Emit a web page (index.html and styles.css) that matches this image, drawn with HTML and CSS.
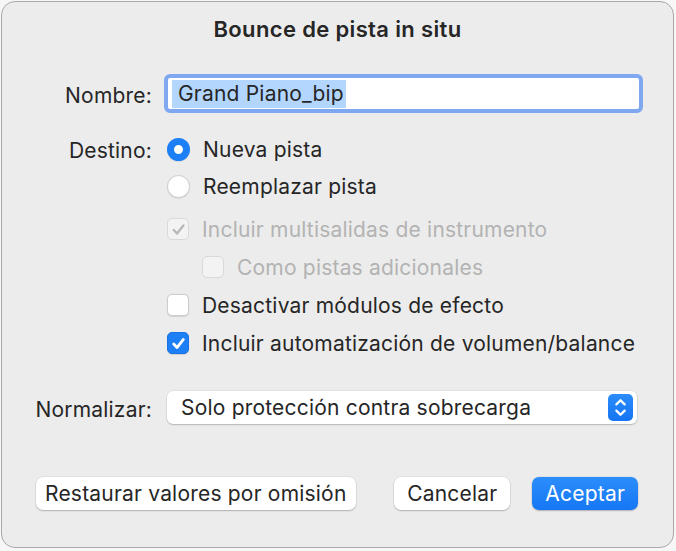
FILE: index.html
```html
<!DOCTYPE html>
<html lang="es">
<head>
    <meta charset="UTF-8">
    <meta name="viewport" content="width=device-width, initial-scale=1.0">
    <title>Bounce de pista in situ</title>
    <link rel="stylesheet" href="styles.css">
</head>
<body>
    <div class="dialog">
        <h1 class="title">Bounce de pista in situ</h1>

        <div class="form">
            <div class="label name-label">Nombre:</div>
            <div class="field">
                <div class="text-field"><span class="selected">Grand Piano_bip</span></div>
            </div>

            <div class="label dest-label">Destino:</div>
            <div class="options">
                <div class="option short">
                    <span class="radio checked"></span>
                    <span>Nueva pista</span>
                </div>
                <div class="option short">
                    <span class="radio"></span>
                    <span>Reemplazar pista</span>
                </div>
                <div class="option disabled spaced">
                    <span class="check checked">
                        <svg viewBox="0 0 16 16"><path d="M3.5 8.5 L6.6 11.8 L12.6 4.2" /></svg>
                    </span>
                    <span>Incluir multisalidas de instrumento</span>
                </div>
                <div class="option disabled nested">
                    <span class="check"></span>
                    <span>Como pistas adicionales</span>
                </div>
                <div class="option">
                    <span class="check"></span>
                    <span>Desactivar módulos de efecto</span>
                </div>
                <div class="option">
                    <span class="check checked on">
                        <svg viewBox="0 0 16 16"><path d="M3.5 8.5 L6.6 11.8 L12.6 4.2" /></svg>
                    </span>
                    <span>Incluir automatización de volumen/balance</span>
                </div>
            </div>

            <div class="label norm-label">Normalizar:</div>
            <div class="popup">
                <span>Solo protección contra sobrecarga</span>
                <span class="stepper">
                    <svg viewBox="0 0 24 26"><path d="M8 10 L12 6 L16 10 M8 16 L12 20 L16 16" /></svg>
                </span>
            </div>
        </div>

        <div class="buttons">
            <button class="btn reset">Restaurar valores por omisión</button>
            <button class="btn cancel">Cancelar</button>
            <button class="btn primary">Aceptar</button>
        </div>
    </div>
</body>
</html>
```

FILE: styles.css
```css
body {
    margin: 0;
    padding: 1px;
    background-color: #f7f7f7;
    font-family: Inter, "Noto Sans", sans-serif;
    color: #262626;
}

.dialog {
    box-sizing: border-box;
    width: 673px;
    height: 547px;
    background-color: #ececec;
    border: 1px solid #a9a9a9;
    border-radius: 14px;
}

.title {
    margin: 0;
    height: 56px;
    line-height: 54px;
    text-align: center;
    font-size: 22px;
    font-weight: 600;
    letter-spacing: 0.35px;
}

.form {
    display: grid;
    grid-template-columns: 150px 1fr;
    column-gap: 15px;
    padding-right: 34px;
    font-size: 21px;
    letter-spacing: 0.2px;
}

.label {
    text-align: right;
    line-height: 22px;
}

.name-label {
    padding-top: 27px;
}

.text-field {
    margin: 16px -4px 0 -3px;
    height: 31px;
    border: 4px solid #7fa8f0;
    border-radius: 6px;
    background-color: #fff;
    padding-left: 4px;
    line-height: 31px;
}

.selected {
    display: inline-block;
    background-color: #b3d6ff;
    line-height: 28px;
    padding: 0 2px 0 6px;
}

.dest-label {
    padding-top: 27px;
}

.options {
    padding-top: 18px;
}

.option {
    display: flex;
    align-items: center;
    gap: 13px;
    height: 38px;
}

.option.short {
    height: 37px;
}

.option.spaced {
    margin-top: 5px;
}

.option.nested {
    padding-left: 35px;
}

.option.disabled {
    color: #b3b3b3;
}

.radio {
    box-sizing: border-box;
    width: 23px;
    height: 23px;
    border-radius: 50%;
    background-color: #fff;
    border: 1px solid #cfcfcf;
    box-shadow: 0 0.5px 1px rgba(0, 0, 0, 0.12);
}

.radio.checked {
    border: 7.5px solid #1d7ff6;
}

.check {
    box-sizing: border-box;
    width: 22px;
    height: 22px;
    border-radius: 5px;
    background-color: #fff;
    border: 1px solid #cdcdcd;
    box-shadow: 0 0.5px 1px rgba(0, 0, 0, 0.12);
    display: flex;
    align-items: center;
    justify-content: center;
}

.disabled .check {
    background-color: #f3f3f3;
    border-color: #d9d9d9;
    box-shadow: none;
}

.check svg {
    width: 17px;
    height: 17px;
    fill: none;
    stroke: #b8b8b8;
    stroke-width: 2.3;
    stroke-linecap: round;
    stroke-linejoin: round;
}

.check.on {
    background-color: #1d7ff6;
    border-color: #1873e4;
}

.check.on svg {
    stroke: #fff;
    stroke-width: 2.6;
}

.norm-label {
    padding-top: 37px;
}

.popup {
    margin-top: 29px;
    height: 33px;
    margin-right: 2px;
    background-color: #fff;
    border-radius: 6px;
    box-shadow: 0 0 0 0.5px rgba(0, 0, 0, 0.08), 0 1px 1.5px rgba(0, 0, 0, 0.2);
    display: flex;
    align-items: center;
    justify-content: space-between;
    padding: 0 4px 0 14px;
}

.stepper {
    width: 25px;
    height: 27px;
    border-radius: 5px;
    background: linear-gradient(#2b8cfb, #1574f3);
    display: flex;
}

.stepper svg {
    width: 25px;
    height: 27px;
    fill: none;
    stroke: #fff;
    stroke-width: 2.2;
    stroke-linecap: round;
    stroke-linejoin: round;
}

.buttons {
    display: flex;
    gap: 22px;
    margin-top: 53px;
    padding: 0 35px 0 34px;
}

.btn {
    flex-shrink: 0;
    white-space: nowrap;
    height: 33px;
    padding: 0 13px;
    font-family: inherit;
    font-size: 21px;
    letter-spacing: 0.2px;
    color: #262626;
    background-color: #fff;
    border: none;
    border-radius: 7px;
    box-shadow: 0 0 0 0.5px rgba(0, 0, 0, 0.08), 0 1px 1.5px rgba(0, 0, 0, 0.22);
}

.btn.reset {
    padding: 0 9px;
}

.btn.cancel {
    margin-left: auto;
}

.btn.primary {
    color: #fff;
    background: linear-gradient(#2c8dfc, #1577f4);
}
```
